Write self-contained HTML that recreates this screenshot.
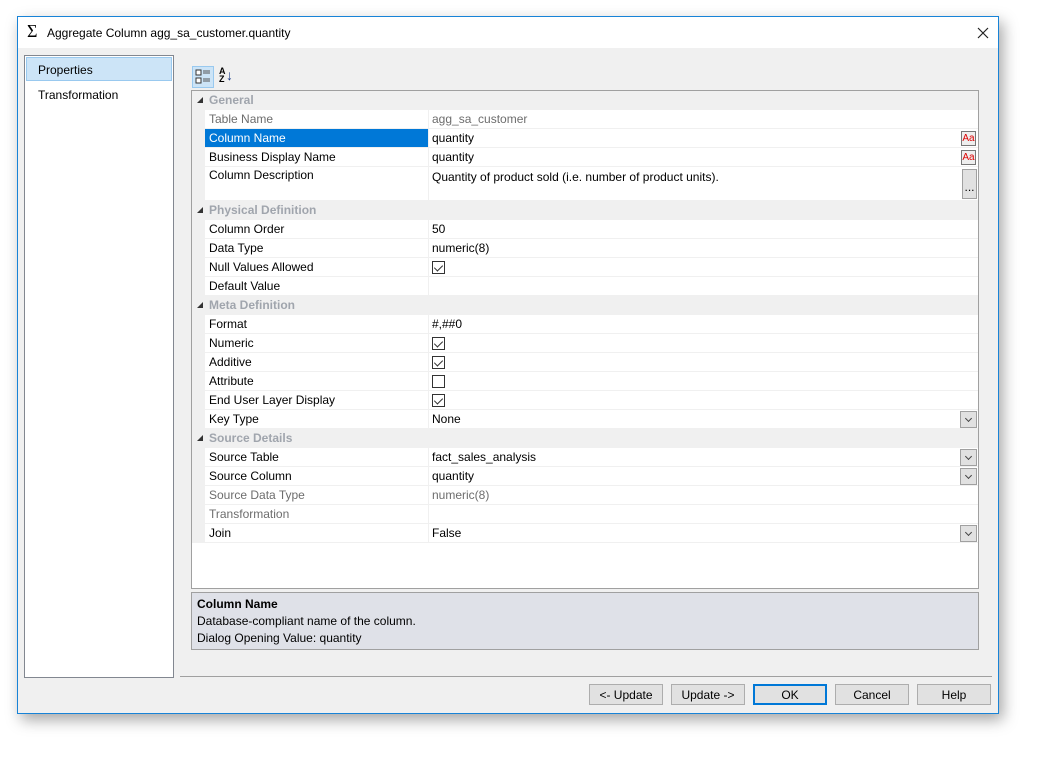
<!DOCTYPE html>
<html><head><style>
*{box-sizing:border-box;margin:0;padding:0}
body{width:1047px;height:762px;background:#fff;font-family:"Liberation Sans",sans-serif;font-size:12px;color:#000;position:relative;overflow:hidden}
.win{position:absolute;left:17px;top:16px;width:982px;height:698px;border:1px solid #1883d7;background:#f0f0f0;box-shadow:4px 6px 14px rgba(0,0,0,.35)}
.title{position:absolute;left:0;top:0;width:980px;height:31px;background:#fff}
.abs{position:absolute}
.grid{position:absolute;left:191px;top:90px;width:788px;height:499px;border:1px solid #a0a0a0;background:#fff}
.row{position:absolute;left:0;width:786px;height:19px;border-bottom:1px solid #f0f0f0}
.cat{background:#f0f0f0;color:#a0a5ad;font-weight:bold}
.cat span{position:absolute;left:17px;top:2px}
.cat i{position:absolute;left:5px;top:6px;width:0;height:0;border-left:6px solid transparent;border-bottom:6px solid #333}
.lm{position:absolute;left:0;top:0;width:13px;height:100%;background:#f0f0f0}
.lab{position:absolute;left:13px;top:0;width:224px;height:100%;padding:2px 0 0 4px;border-right:1px solid #f0f0f0}
.val{position:absolute;left:237px;top:0;right:0;height:100%;padding:2px 0 0 3px}
.g{color:#6d6d6d}
.cb{display:inline-block;width:13px;height:13px;border:1px solid #333;position:relative;top:0;margin-top:1px}
.cb.c::after{content:"";position:absolute;left:3px;top:1px;width:4px;height:7px;border-right:1.5px solid #333;border-bottom:1.5px solid #333;transform:rotate(45deg)}
.dd{position:absolute;right:1px;top:1px;width:17px;height:17px;background:#e1e1e1;border:1px solid #a0a0a0}
.dd::after{content:"";position:absolute;left:5px;top:4px;width:4px;height:4px;border-right:1px solid #444;border-bottom:1px solid #444;transform:rotate(45deg)}
.aa{position:absolute;right:2px;top:2px;width:15px;height:15px;border:1px solid #777;background:#eee;color:#d00;font-size:10px;line-height:13px;text-align:center}
.btn{position:absolute;top:668px;width:74px;height:21px;border:1px solid #adadad;background:#e1e1e1;text-align:center;line-height:21px}
</style></head><body>
<div class="win">
 <div class="title">
  <div class="abs" style="left:9px;top:4px;font-size:18px;font-family:'Liberation Serif',serif">&Sigma;</div>
  <div class="abs" style="left:29px;top:9px;font-size:12px">Aggregate Column agg_sa_customer.quantity</div>
  <svg class="abs" style="left:959px;top:10px" width="12" height="12"><path d="M1 1L11 11M11 1L1 11" stroke="#222" stroke-width="1.2"/></svg>
 </div>
 <div class="abs" style="left:6px;top:38px;width:150px;height:623px;border:1px solid #828790;background:#fff">
  <div class="abs" style="left:1px;top:1px;width:146px;height:24px;background:#cce4f7;border:1px solid #99c9ef"></div>
  <div class="abs" style="left:13px;top:7px">Properties</div>
  <div class="abs" style="left:13px;top:32px">Transformation</div>
 </div>
 <div class="abs" style="left:174px;top:49px;width:22px;height:22px;background:#cce4f7;border:1px solid #99c9ef">
  <svg width="20" height="20"><rect x="3" y="3" width="5" height="5" fill="#fff" stroke="#333"/><rect x="3" y="11" width="5" height="5" fill="#fff" stroke="#333"/><path d="M10 4h7M10 6h7M10 12h7M10 14h7" stroke="#555"/></svg>
 </div>
 <div class="abs" style="left:201px;top:50px;font-size:9px;line-height:8px;font-weight:bold">A<br>Z</div>
 <div class="abs" style="left:208px;top:50px;color:#1a3b8a;font-size:14px">&#8595;</div>
</div>
<div class="grid">
 <div class="row cat" style="top:0"><i></i><span>General</span></div>
 <div class="row" style="top:19px"><div class="lm"></div><div class="lab g">Table Name</div><div class="val g">agg_sa_customer</div></div>
 <div class="row" style="top:38px"><div class="lm"></div><div class="lab" style="background:#0078d7;color:#fff">Column Name</div><div class="val">quantity</div><div class="aa">Aa</div></div>
 <div class="row" style="top:57px"><div class="lm"></div><div class="lab">Business Display Name</div><div class="val">quantity</div><div class="aa">Aa</div></div>
 <div class="row" style="top:76px;height:34px"><div class="lm"></div><div class="lab" style="padding-top:1px">Column Description</div><div class="val" style="padding-top:3px">Quantity of product sold (i.e. number of product units).</div><div class="abs" style="right:1px;top:2px;width:15px;height:30px;background:#e1e1e1;border:1px solid #a0a0a0;text-align:center;line-height:34px">...</div></div>
 <div class="row cat" style="top:110px"><i></i><span>Physical Definition</span></div>
 <div class="row" style="top:129px"><div class="lm"></div><div class="lab">Column Order</div><div class="val">50</div></div>
 <div class="row" style="top:148px"><div class="lm"></div><div class="lab">Data Type</div><div class="val">numeric(8)</div></div>
 <div class="row" style="top:167px"><div class="lm"></div><div class="lab">Null Values Allowed</div><div class="val"><span class="cb c"></span></div></div>
 <div class="row" style="top:186px"><div class="lm"></div><div class="lab">Default Value</div><div class="val"></div></div>
 <div class="row cat" style="top:205px"><i></i><span>Meta Definition</span></div>
 <div class="row" style="top:224px"><div class="lm"></div><div class="lab">Format</div><div class="val">#,##0</div></div>
 <div class="row" style="top:243px"><div class="lm"></div><div class="lab">Numeric</div><div class="val"><span class="cb c"></span></div></div>
 <div class="row" style="top:262px"><div class="lm"></div><div class="lab">Additive</div><div class="val"><span class="cb c"></span></div></div>
 <div class="row" style="top:281px"><div class="lm"></div><div class="lab">Attribute</div><div class="val"><span class="cb"></span></div></div>
 <div class="row" style="top:300px"><div class="lm"></div><div class="lab">End User Layer Display</div><div class="val"><span class="cb c"></span></div></div>
 <div class="row" style="top:319px"><div class="lm"></div><div class="lab">Key Type</div><div class="val">None</div><div class="dd"></div></div>
 <div class="row cat" style="top:338px"><i></i><span>Source Details</span></div>
 <div class="row" style="top:357px"><div class="lm"></div><div class="lab">Source Table</div><div class="val">fact_sales_analysis</div><div class="dd"></div></div>
 <div class="row" style="top:376px"><div class="lm"></div><div class="lab">Source Column</div><div class="val">quantity</div><div class="dd"></div></div>
 <div class="row" style="top:395px"><div class="lm"></div><div class="lab g">Source Data Type</div><div class="val g">numeric(8)</div></div>
 <div class="row" style="top:414px"><div class="lm"></div><div class="lab g">Transformation</div><div class="val"></div></div>
 <div class="row" style="top:433px"><div class="lm"></div><div class="lab">Join</div><div class="val">False</div><div class="dd"></div></div>
</div>
<div class="abs" style="left:191px;top:592px;width:788px;height:58px;background:#dfe1e8;border:1px solid #a0a0a0;padding:3px 5px;line-height:17px">
 <b>Column Name</b><br>Database-compliant name of the column.<br>Dialog Opening Value: quantity
</div>
<div class="abs" style="left:180px;top:676px;width:812px;height:1px;background:#a0a0a0"></div>
<div style="position:absolute;left:17px;top:16px">
 <div class="btn" style="left:572px">&lt;- Update</div>
 <div class="btn" style="left:654px">Update -&gt;</div>
 <div class="btn" style="left:736px;border:2px solid #0078d7;line-height:19px">OK</div>
 <div class="btn" style="left:818px">Cancel</div>
 <div class="btn" style="left:900px">Help</div>
</div>
</body></html>
